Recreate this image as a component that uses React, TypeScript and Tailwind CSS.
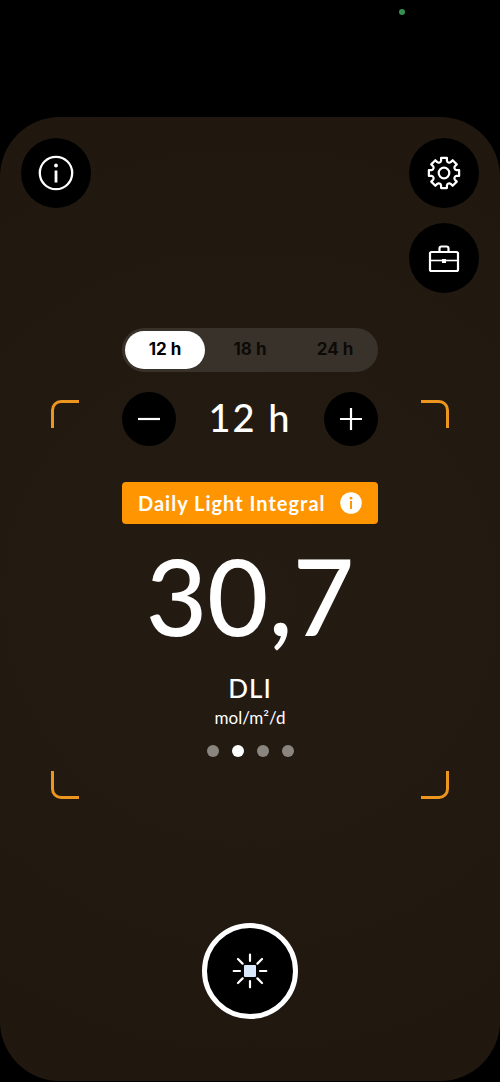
import React, { useState } from 'react';

const PRESETS = [12, 18, 24];
const PAGES = ['PPFD', 'DLI', 'Lux', 'Kelvin'];

// Outline of an eight-toothed gear centred on 0,0
const gearPath = (() => {
    const points: string[] = [];
    for (let i = 0; i < 8; i++) {
        const mid = (i * Math.PI) / 4 - Math.PI / 2;
        const corners = [
            [-0.23, 12.8],
            [-0.19, 15.4],
            [0.19, 15.4],
            [0.23, 12.8]
        ];
        corners.forEach(([angle, r], n) => {
            const x = (Math.cos(mid + angle) * r).toFixed(2);
            const y = (Math.sin(mid + angle) * r).toFixed(2);
            if (i === 0 && n === 0) {
                points.push(`M${x} ${y}`);
            } else if (n === 0) {
                points.push(`A2.4 2.4 0 0 0 ${x} ${y}`);
            } else {
                points.push(`L${x} ${y}`);
            }
        });
    }
    const x0 = (Math.cos(-Math.PI / 2 - 0.23) * 12.8).toFixed(2);
    const y0 = (Math.sin(-Math.PI / 2 - 0.23) * 12.8).toFixed(2);
    return `${points.join('')}A2.4 2.4 0 0 0 ${x0} ${y0}Z`;
})();

const InfoIcon = () => (
    <svg className="w-9 h-9" viewBox="0 0 36 36" fill="none" stroke="white">
        <circle cx="18" cy="18" r="16.2" strokeWidth="2.3" />
        <path d="M18 15.5V27.5" strokeWidth="2.8" />
        <circle cx="18" cy="10.5" r="1.9" fill="white" stroke="none" />
    </svg>
);

const GearIcon = () => (
    <svg className="w-9 h-9" viewBox="-18 -18 36 36" fill="none" stroke="white" strokeWidth="2.2" strokeLinejoin="round">
        <path d={gearPath} />
        <circle r="5.3" />
    </svg>
);

const BriefcaseIcon = () => (
    <svg className="w-9 h-9" viewBox="0 0 36 36" fill="none" stroke="white" strokeWidth="2.2">
        <rect x="4" y="12" width="28" height="19" rx="1.5" />
        <path d="M13.5 12V8.5a2 2 0 0 1 2-2h5a2 2 0 0 1 2 2V12" />
        <path d="M4 20.5H32" strokeWidth="1.6" />
        <rect x="16" y="19" width="4" height="4" fill="white" stroke="none" />
    </svg>
);

const SunIcon = () => (
    <svg className="w-9 h-9" viewBox="-18 -18 36 36" fill="none" stroke="white" strokeWidth="2.2" strokeLinecap="round">
        <path d="M0 -16.3V-10M0 16.3V10M-16.3 0H-10M16.3 0H10M-12 -12L-7.4 -7.4M12 -12L7.4 -7.4M-12 12L-7.4 7.4M12 12L7.4 7.4" />
        <rect x="-6" y="-6" width="12" height="12" rx="1" fill="#d8e8fa" stroke="none" />
    </svg>
);

interface RoundButtonProps {
    label: string;
    size?: string;
    onClick?: () => void;
    children: React.ReactNode;
}

const RoundButton: React.FC<RoundButtonProps> = ({ label, size = 'w-[70px] h-[70px]', onClick, children }) => (
    <button
        type="button"
        aria-label={label}
        onClick={onClick}
        className={`${size} rounded-full bg-black flex items-center justify-center`}
    >
        {children}
    </button>
);

const Corner = ({ className }: { className: string }) => (
    <span className={`w-7 h-7 border-[#ec951f] ${className}`} />
);

export default function App() {
    const [hours, setHours] = useState(12);
    const [page, setPage] = useState(1);

    return (
        <div className="min-h-screen bg-black flex flex-col font-['Lato','Liberation_Sans',sans-serif] text-white">
            {/* Status bar */}
            <div className="h-[117px] flex justify-end items-start pt-[9px] pr-[95px]">
                <span className="w-[6px] h-[6px] rounded-full bg-[#35914d]" />
            </div>

            <main className="flex-1 mb-px rounded-[60px] bg-[radial-gradient(circle_at_center,#241c13,#20180f)] flex flex-col items-center pt-[21px] pb-[62px]">
                {/* Toolbar */}
                <header className="self-stretch flex justify-between items-start px-[21px]">
                    <RoundButton label="Info">
                        <InfoIcon />
                    </RoundButton>
                    <div className="flex flex-col gap-[15px]">
                        <RoundButton label="Settings">
                            <GearIcon />
                        </RoundButton>
                        <RoundButton label="Toolbox">
                            <BriefcaseIcon />
                        </RoundButton>
                    </div>
                </header>

                {/* Photoperiod presets */}
                <div
                    role="radiogroup"
                    aria-label="Photoperiod"
                    className="mt-[35px] w-64 h-11 p-[3px] rounded-full bg-[#38322b] grid grid-cols-3 gap-[5px] font-['Inter','Liberation_Sans',sans-serif] text-[17px] font-bold"
                >
                    {PRESETS.map((value) => (
                        <label
                            key={value}
                            className={`rounded-full flex items-center justify-center ${
                                hours === value ? 'bg-white text-black' : 'text-[#0d0a07]'
                            }`}
                        >
                            <input
                                type="radio"
                                name="preset"
                                className="sr-only"
                                checked={hours === value}
                                onChange={() => setHours(value)}
                            />
                            {value} h
                        </label>
                    ))}
                </div>

                {/* Reading, shares its grid cell with the viewfinder corners */}
                <section className="mt-5 self-stretch grid px-[51px]">
                    <div className="col-start-1 row-start-1 mt-2 h-[399px] grid grid-cols-2 content-between justify-between">
                        <Corner className="border-t-[3px] border-l-[3px] rounded-tl-[10px]" />
                        <Corner className="border-t-[3px] border-r-[3px] rounded-tr-[10px] justify-self-end" />
                        <Corner className="border-b-[3px] border-l-[3px] rounded-bl-[10px]" />
                        <Corner className="border-b-[3px] border-r-[3px] rounded-br-[10px] justify-self-end" />
                    </div>

                    <div className="col-start-1 row-start-1 justify-self-center w-64 flex flex-col items-center">
                        <div className="self-stretch flex items-center justify-between">
                            <RoundButton label="Less" size="w-[54px] h-[54px]" onClick={() => setHours(Math.max(1, hours - 1))}>
                                <svg className="w-6 h-6" viewBox="0 0 24 24" stroke="white" strokeWidth="2.2">
                                    <path d="M1 12H23" />
                                </svg>
                            </RoundButton>
                            <span className="pb-1 text-[38px] leading-[50px] font-medium tracking-[2px]">{hours} h</span>
                            <RoundButton label="More" size="w-[54px] h-[54px]" onClick={() => setHours(Math.min(24, hours + 1))}>
                                <svg className="w-6 h-6" viewBox="0 0 24 24" stroke="white" strokeWidth="2.2">
                                    <path d="M1 12H23M12 1V23" />
                                </svg>
                            </RoundButton>
                        </div>

                        <button
                            type="button"
                            className="mt-9 self-stretch h-[42px] px-4 rounded-[4px] bg-[#ff9500] flex items-center justify-between text-[20px] font-bold tracking-[1px] whitespace-nowrap"
                        >
                            Daily Light Integral
                            <svg className="w-[22px] h-[22px]" viewBox="0 0 22 22">
                                <circle cx="11" cy="11" r="10.8" fill="white" />
                                <circle cx="11" cy="6.2" r="1.4" fill="#ff9500" />
                                <path d="M11 9V17" stroke="#ff9500" strokeWidth="2" />
                            </svg>
                        </button>

                        <div className="mt-5 text-[106px] leading-[102px] font-medium">30,7</div>
                        <div className="mt-[26px] text-[26px] leading-8 font-medium tracking-[1px]">DLI</div>
                        <div className="text-[17px] leading-7">mol/m²/d</div>

                        <nav className="mt-[13px] flex gap-[13px]">
                            {PAGES.map((name, i) => (
                                <button
                                    key={name}
                                    type="button"
                                    aria-label={name}
                                    onClick={() => setPage(i)}
                                    className={`w-3 h-3 rounded-full ${page === i ? 'bg-white' : 'bg-[#8b8580]'}`}
                                />
                            ))}
                        </nav>
                    </div>
                </section>

                {/* Measure */}
                <button
                    type="button"
                    aria-label="Measure"
                    className="mt-auto w-24 h-24 rounded-full border-[5px] border-white bg-black flex items-center justify-center"
                >
                    <SunIcon />
                </button>
            </main>
        </div>
    );
}
